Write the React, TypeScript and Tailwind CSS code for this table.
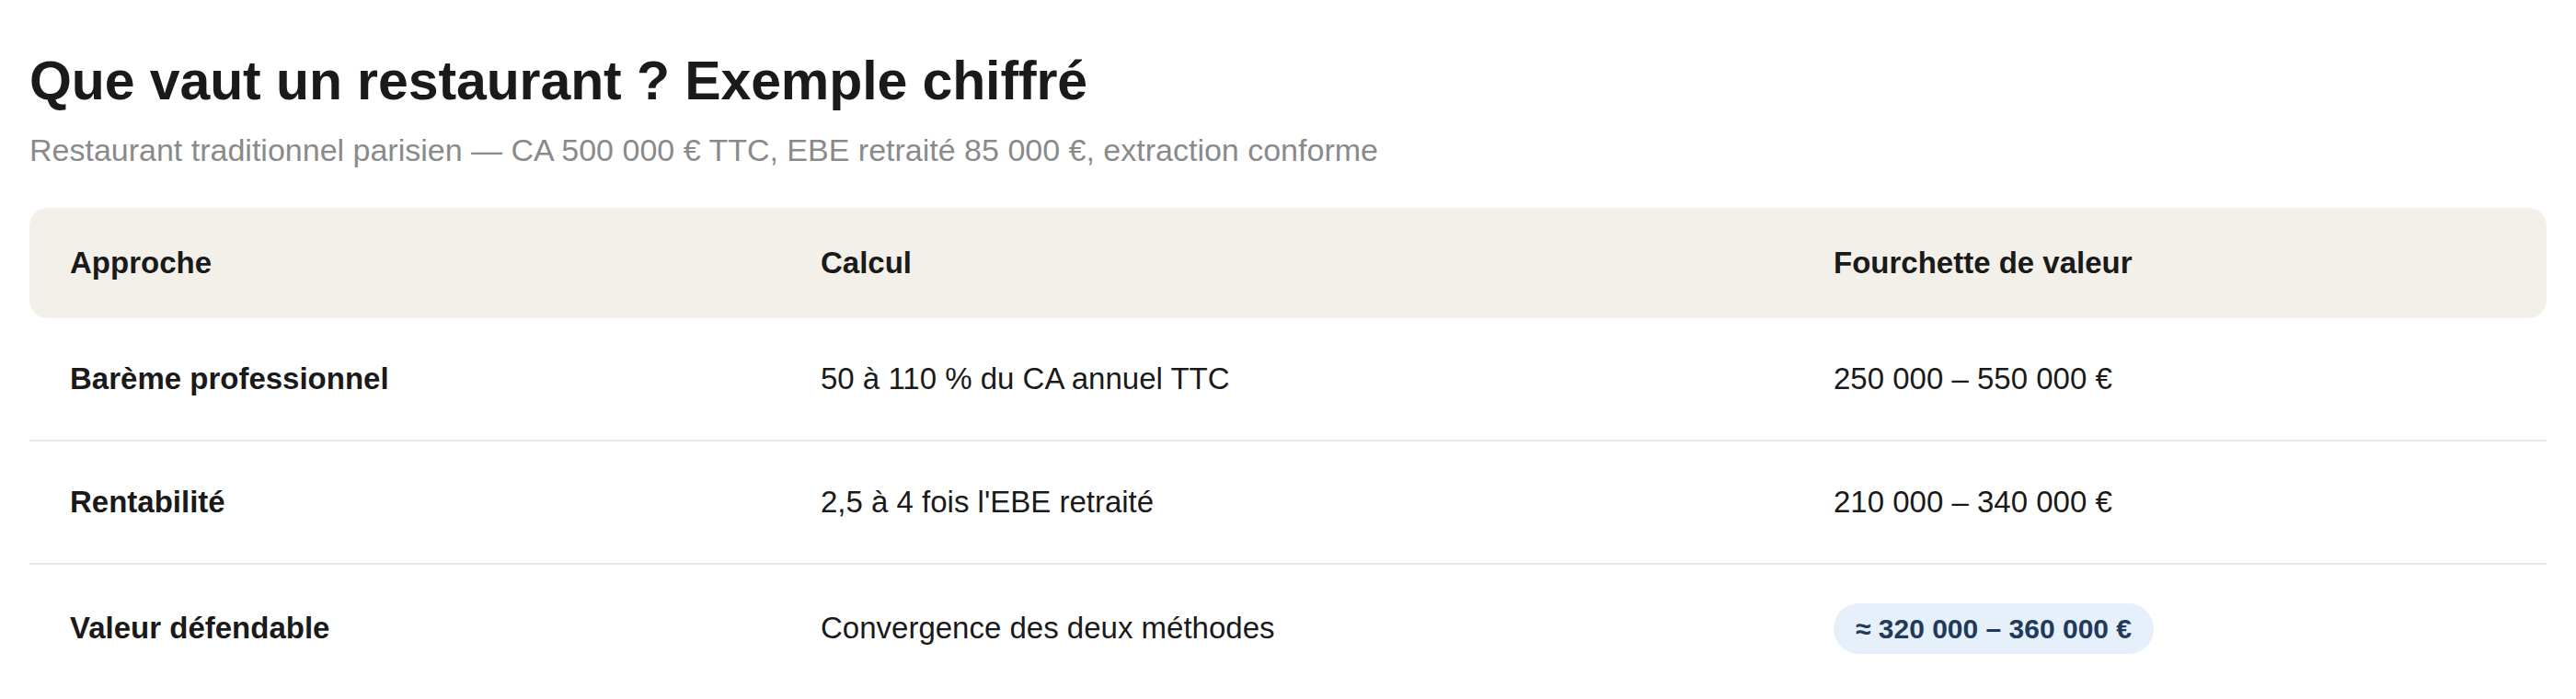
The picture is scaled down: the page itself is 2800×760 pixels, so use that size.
const rows = [
  { approach: 'Barème professionnel', calc: '50 à 110 % du CA annuel TTC', range: '250 000 – 550 000 €' },
  { approach: 'Rentabilité', calc: "2,5 à 4 fois l'EBE retraité", range: '210 000 – 340 000 €' },
  { approach: 'Valeur défendable', calc: 'Convergence des deux méthodes', range: '≈ 320 000 – 360 000 €', highlight: true },
]

const grid = 'grid grid-cols-[816px_1101px_1fr] items-baseline'

export default function App() {
  return (
    <div className="min-h-screen bg-white px-[32px] pt-[53px] text-[#1a1a1a] font-['Liberation_Sans',Arial,sans-serif]">
      {/* Heading */}
      <h1 className="text-[59px] font-bold leading-[71px] tracking-[-0.1px]">Que vaut un restaurant ? Exemple chiffré</h1>
      <p className="mt-[15px] text-[34px] leading-[48px] text-[#8a8a8a]">
        Restaurant traditionnel parisien — CA 500 000 € TTC, EBE retraité 85 000 €, extraction conforme
      </p>

      {/* Table */}
      <div className="mt-[39px] w-full">
        <div className={`${grid} rounded-[20px] bg-[#f3f0ea] text-[33px] font-bold leading-[48px]`}>
          <div className="px-[44px] py-[36px]">Approche</div>
          <div className="px-[44px] py-[36px]">Calcul</div>
          <div className="px-[44px] py-[36px]">Fourchette de valeur</div>
        </div>

        {rows.map((r, i) => (
          <div
            key={r.approach}
            className={`${grid} text-[33px] leading-[48px] ${i < rows.length - 1 ? 'border-b-2 border-[#ebe8e2]' : ''}`}
          >
            <div className="px-[44px] py-[42px] font-bold">{r.approach}</div>
            <div className="px-[44px] py-[42px]">{r.calc}</div>
            <div className="px-[44px] py-[42px]">
              {r.highlight ? (
                <span className="inline-flex h-[55px] items-center rounded-full bg-[#e6f0fa] px-[24px] text-[30px] font-bold text-[#1f3a5a]">
                  {r.range}
                </span>
              ) : (
                r.range
              )}
            </div>
          </div>
        ))}
      </div>
    </div>
  )
}
